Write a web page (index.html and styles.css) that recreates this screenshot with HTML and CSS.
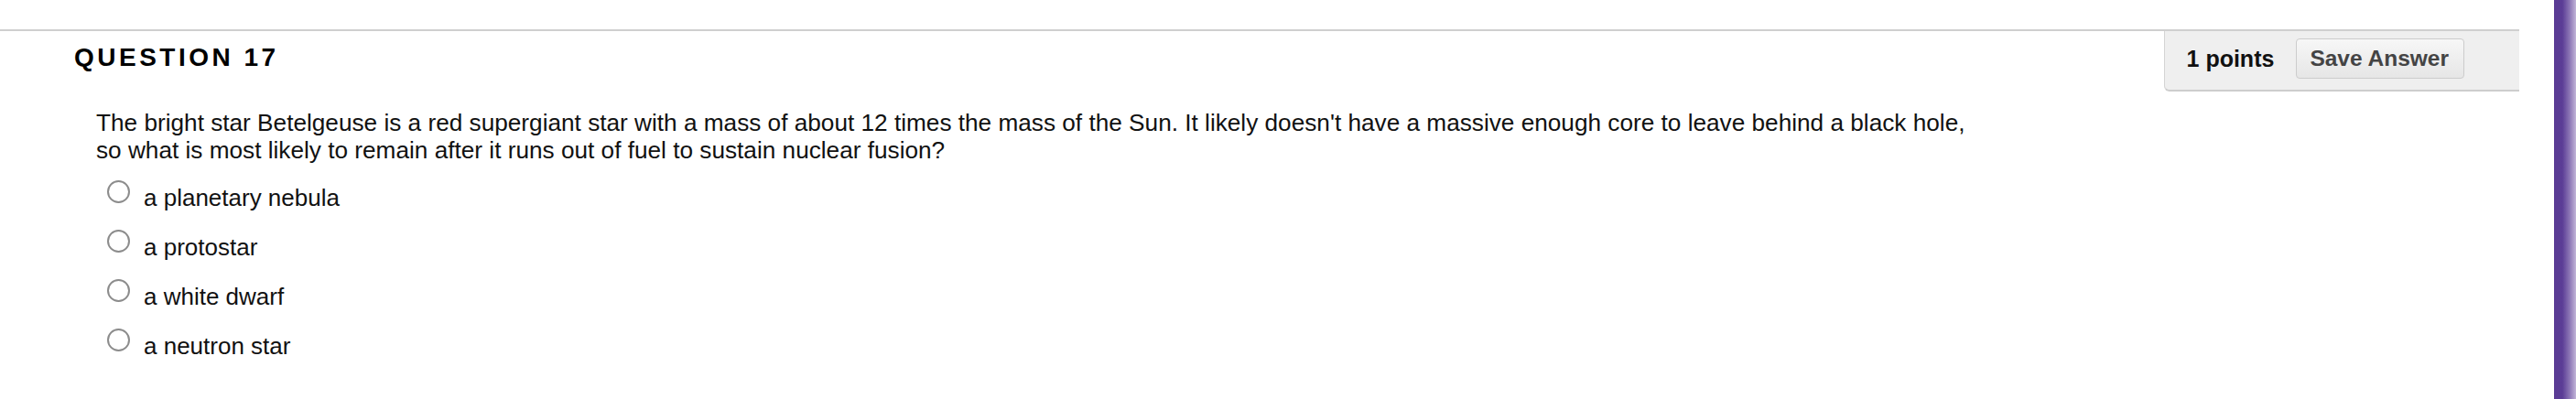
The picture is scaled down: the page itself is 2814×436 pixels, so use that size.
FILE: index.html
```html
<!DOCTYPE html>
<html lang="en">
<head>
<meta charset="utf-8">
<title>Question 17</title>
<link rel="stylesheet" href="styles.css">
</head>
<body>
<div class="page">
  <div class="main">
    <div class="qhead">
      <h3 class="qtitle">QUESTION 17</h3>
      <div class="panel">
        <span class="points">1 points</span>
        <button class="save" type="button">Save Answer</button>
      </div>
    </div>
    <div class="qbody">
      <p class="qtext">The bright star Betelgeuse is a red supergiant star with a mass of about 12 times the mass of the Sun. It likely doesn't have a massive enough core to leave behind a black hole,<br>so what is most likely to remain after it runs out of fuel to sustain nuclear fusion?</p>
      <ul class="options">
        <li class="option"><span class="radio"></span><span class="label">a planetary nebula</span></li>
        <li class="option"><span class="radio"></span><span class="label">a protostar</span></li>
        <li class="option"><span class="radio"></span><span class="label">a white dwarf</span></li>
        <li class="option"><span class="radio"></span><span class="label">a neutron star</span></li>
      </ul>
    </div>
  </div>
  <div class="scrollbar"></div>
</div>
</body>
</html>
```

FILE: styles.css
```css
html, body {
  margin: 0;
  padding: 0;
  background: #fff;
}

body {
  font-family: "Liberation Sans", Arial, Helvetica, sans-serif;
  color: #111;
}

.page {
  display: flex;
  min-height: 436px;
}

.main {
  flex: 0 0 2752px;
  width: 2752px;
  padding-top: 32px;
}

.qhead {
  display: flex;
  justify-content: space-between;
  align-items: flex-start;
  border-top: 2px solid #cfcfcf;
}

.qtitle {
  margin: 0;
  padding: 13px 0 0 81px;
  font-size: 28px;
  line-height: 32px;
  font-weight: bold;
  letter-spacing: 3.5px;
  color: #000;
}

.panel {
  display: flex;
  align-items: center;
  gap: 24px;
  padding: 8px 60px 12px 24px;
  background: #efefef;
  border-left: 1px solid #d4d4d4;
  border-bottom: 2px solid #cdcdcd;
  border-bottom-left-radius: 6px;
}

.points {
  font-size: 25px;
  line-height: 28px;
  font-weight: bold;
  color: #111;
}

.save {
  font-family: "Liberation Sans", Arial, Helvetica, sans-serif;
  font-size: 24.5px;
  line-height: 28px;
  font-weight: bold;
  color: #444;
  padding: 7px 16px 7px 14px;
  border: 1px solid #cccccc;
  border-radius: 4px;
  background: linear-gradient(to bottom, #f7f7f7, #e6e6e6);
  margin: 0;
}

.qbody {
  padding: 19px 0 0 105px;
}

.qtext {
  margin: 0;
  font-size: 26.2px;
  line-height: 30px;
  color: #111;
}

.options {
  list-style: none;
  margin: 11px 0 0;
  padding: 0 0 0 12px;
}

.option {
  display: flex;
  align-items: flex-start;
  padding: 7px 0 13px;
}

.radio {
  flex: 0 0 25px;
  width: 25px;
  height: 25px;
  box-sizing: border-box;
  border: 2px solid #8c8c8c;
  border-radius: 50%;
  background: #fff;
}

.label {
  margin: 4px 0 0 15px;
  font-size: 26px;
  line-height: 30px;
  color: #111;
}

.scrollbar {
  margin-left: auto;
  width: 24px;
  flex: 0 0 24px;
  background: linear-gradient(to right, #5a3b94 0%, #5b3d96 38%, #8a74b4 70%, #c2b4d8 100%);
}
```
